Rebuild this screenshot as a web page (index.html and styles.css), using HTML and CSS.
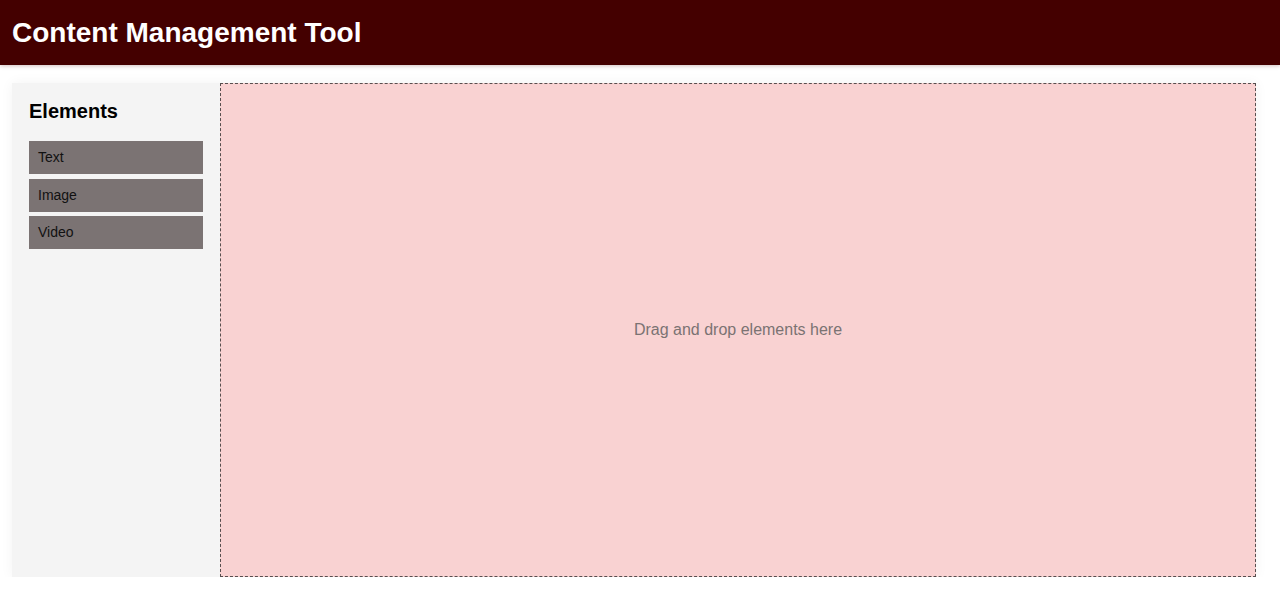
FILE: index.html
```html
<!DOCTYPE html>
<html lang="en">
<head>
<meta charset="utf-8">
<title>Content Management Tool</title>
<link rel="stylesheet" href="styles.css">
</head>
<body>
<header class="app-header">
  <h1 class="app-title">Content Management Tool</h1>
</header>
<main class="app-main">
  <div class="workspace">
    <aside class="sidebar">
      <h2 class="sidebar-title">Elements</h2>
      <div class="element-item">Text</div>
      <div class="element-item">Image</div>
      <div class="element-item">Video</div>
    </aside>
    <section class="canvas">
      <p class="canvas-hint">Drag and drop elements here</p>
    </section>
  </div>
</main>
</body>
</html>
```

FILE: styles.css
```css
* { box-sizing: border-box; }

html, body {
  margin: 0;
  padding: 0;
  background: #ffffff;
  font-family: "Liberation Sans", Arial, sans-serif;
}

.app-header {
  background: #440000;
  color: #ffffff;
  height: 65px;
  padding: 17px 12px 16px;
  box-shadow: 0 1px 4px rgba(80, 0, 0, 0.25);
}

.app-title {
  margin: 0;
  font-size: 28px;
  line-height: 32px;
  font-weight: bold;
}

.app-main {
  padding: 18px 24px 0 12px;
}

.workspace {
  display: flex;
  height: 494px;
  box-shadow: 0 0 12px rgba(0, 0, 0, 0.05);
}

.sidebar {
  width: 208px;
  flex: none;
  background: #f4f4f4;
  padding: 17px 17px 16px;
}

.sidebar-title {
  margin: 0 0 18px;
  font-size: 20px;
  line-height: 23px;
  font-weight: bold;
  color: #000000;
}

.element-item {
  background: #7b7373;
  color: #111111;
  font-size: 14px;
  line-height: 17px;
  padding: 8px 9px;
  margin-bottom: 4.5px;
}

.canvas {
  flex: 1;
  background: #f9d2d2;
  border: 1px dashed #574e4e;
  display: flex;
  align-items: center;
  justify-content: center;
}

.canvas-hint {
  margin: 0;
  font-size: 16px;
  color: #7b7373;
}
```
